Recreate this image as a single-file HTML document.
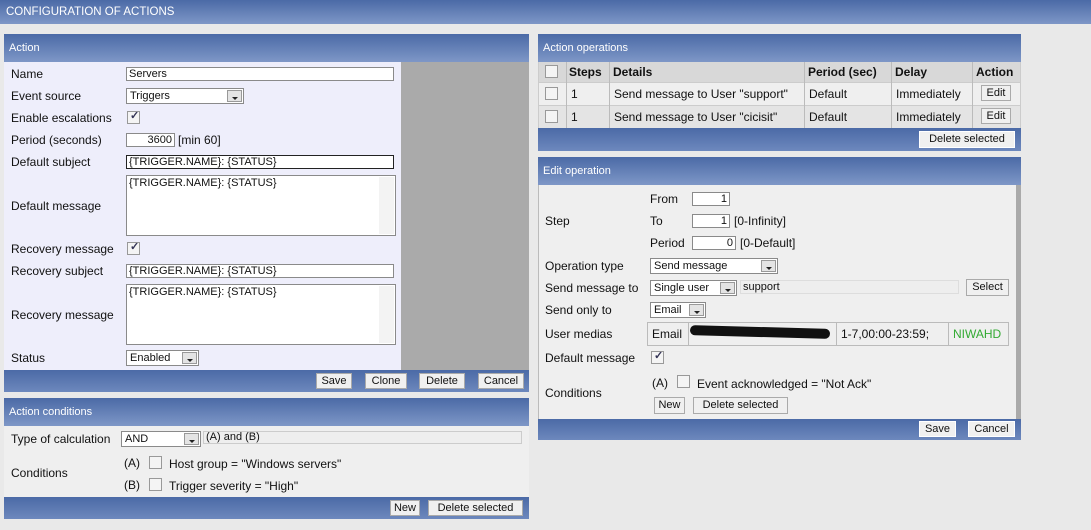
<!DOCTYPE html>
<html><head><style>
*{box-sizing:border-box;margin:0;padding:0}
body{width:1091px;height:530px;background:#e9e9e9;font-family:"Liberation Sans",Tahoma,sans-serif;font-size:12px;color:#111;position:relative;overflow:hidden}
.a{position:absolute;white-space:nowrap}
.hd{position:absolute;background:linear-gradient(#4b6aa6,#7e97c7);color:#fff;font-size:11px;padding-left:5px}
.ft{position:absolute;background:linear-gradient(#4b6aa6,#6d88bd)}
.in{position:absolute;background:#fff;border:1px solid #8a8a8a;font-size:11px;padding-left:2px;line-height:13px}
.sel{position:absolute;background:#fff;border:1px solid #8a8a8a;font-size:11px;padding-left:3px;line-height:15px}
.sel i{position:absolute;right:1px;top:1px;width:15px;bottom:1px;background:#e4e4e4;border:1px solid #999}
.sel i:after{content:"";position:absolute;left:4px;top:6px;border-left:3px solid transparent;border-right:3px solid transparent;border-top:3px solid #222}
.cb{position:absolute;width:13px;height:13px;background:#f4f4f4;border:1px solid #999}
.cb.on:after{content:"✓";position:absolute;left:2px;top:-3px;font-size:11px;color:#335;font-weight:bold}
.bt{position:absolute;background:#f0f0f0;border:1px solid #aaa;font-size:11px;text-align:center;line-height:15px}
.ta{position:absolute;background:#fff;border:1px solid #8a8a8a;font-size:11px;padding:1px 2px}
.ta:after{content:"";position:absolute;right:1px;top:1px;bottom:1px;width:15px;background:#f3f3f3}
</style></head><body>
<div class="hd" style="left:0;top:0;width:1091px;height:24px;line-height:24px;padding-left:6px;font-size:11.5px">CONFIGURATION OF ACTIONS</div>

<div class="hd" style="left:4px;top:34px;width:525px;height:28px;line-height:28px">Action</div>
<div class="a" style="left:4px;top:62px;width:397px;height:308px;background:#eeeefb"></div>
<div class="a" style="left:401px;top:62px;width:128px;height:308px;background:#aaa"></div>
<div class="ft" style="left:4px;top:370px;width:525px;height:22px"></div>
<div class="a" style="left:11px;top:67px">Name</div><div class="in" style="left:126px;top:67px;width:268px;height:14px">Servers</div>
<div class="a" style="left:11px;top:89px">Event source</div><div class="sel" style="left:126px;top:88px;width:118px;height:16px">Triggers<i></i></div>
<div class="a" style="left:11px;top:111px">Enable escalations</div><div class="cb on" style="left:127px;top:111px"></div>
<div class="a" style="left:11px;top:133px">Period (seconds)</div><div class="in" style="left:126px;top:133px;width:49px;height:14px;text-align:right;padding-right:2px">3600</div><div class="a" style="left:178px;top:133px">[min 60]</div>
<div class="a" style="left:11px;top:155px">Default subject</div><div class="in" style="left:126px;top:155px;width:268px;height:14px;border-color:#222">{TRIGGER.NAME}: {STATUS}</div>
<div class="a" style="left:11px;top:199px">Default message</div><div class="ta" style="left:126px;top:175px;width:270px;height:61px">{TRIGGER.NAME}: {STATUS}</div>
<div class="a" style="left:11px;top:242px">Recovery message</div><div class="cb on" style="left:127px;top:242px"></div>
<div class="a" style="left:11px;top:264px">Recovery subject</div><div class="in" style="left:126px;top:264px;width:268px;height:14px">{TRIGGER.NAME}: {STATUS}</div>
<div class="a" style="left:11px;top:308px">Recovery message</div><div class="ta" style="left:126px;top:284px;width:270px;height:61px">{TRIGGER.NAME}: {STATUS}</div>
<div class="a" style="left:11px;top:351px">Status</div><div class="sel" style="left:126px;top:350px;width:73px;height:16px">Enabled<i></i></div>
<div class="bt" style="left:316px;top:373px;width:36px;height:16px">Save</div>
<div class="bt" style="left:365px;top:373px;width:42px;height:16px">Clone</div>
<div class="bt" style="left:419px;top:373px;width:46px;height:16px">Delete</div>
<div class="bt" style="left:478px;top:373px;width:46px;height:16px">Cancel</div>

<div class="hd" style="left:4px;top:398px;width:525px;height:28px;line-height:28px">Action conditions</div>
<div class="a" style="left:4px;top:426px;width:525px;height:71px;background:#efefef"></div>
<div class="ft" style="left:4px;top:497px;width:525px;height:22px"></div>
<div class="a" style="left:11px;top:432px">Type of calculation</div><div class="sel" style="left:121px;top:431px;width:80px;height:16px">AND<i></i></div>
<div class="a" style="left:203px;top:431px;width:319px;height:13px;background:#eee;border:1px solid #ccc;font-size:11px;line-height:11px;padding-left:2px">(A) and (B)</div>
<div class="a" style="left:11px;top:466px">Conditions</div>
<div class="a" style="left:124px;top:456px">(A)</div><div class="cb" style="left:149px;top:456px"></div><div class="a" style="left:169px;top:457px">Host group = "Windows servers"</div>
<div class="a" style="left:124px;top:478px">(B)</div><div class="cb" style="left:149px;top:478px"></div><div class="a" style="left:169px;top:479px">Trigger severity = "High"</div>
<div class="bt" style="left:390px;top:500px;width:30px;height:16px">New</div>
<div class="bt" style="left:428px;top:500px;width:95px;height:16px">Delete selected</div>

<div class="hd" style="left:538px;top:34px;width:483px;height:28px;line-height:28px">Action operations</div>
<div class="a" style="left:538px;top:62px;width:483px;height:67px;background:#ccc"></div>
<div class="a" style="left:539px;top:62px;width:481px;height:20px;background:#d8d8d8"></div>
<div class="a" style="left:539px;top:83px;width:481px;height:22px;background:#efefef"></div>
<div class="a" style="left:539px;top:106px;width:481px;height:22px;background:#e4e4e4"></div>
<div class="a" style="left:566px;top:62px;width:1px;height:66px;background:#bbb"></div>
<div class="a" style="left:609px;top:62px;width:1px;height:66px;background:#bbb"></div>
<div class="a" style="left:804px;top:62px;width:1px;height:66px;background:#bbb"></div>
<div class="a" style="left:891px;top:62px;width:1px;height:66px;background:#bbb"></div>
<div class="a" style="left:972px;top:62px;width:1px;height:66px;background:#bbb"></div>
<div class="cb" style="left:545px;top:65px"></div>
<div class="a" style="left:569px;top:65px;font-weight:bold">Steps</div>
<div class="a" style="left:613px;top:65px;font-weight:bold">Details</div>
<div class="a" style="left:808px;top:65px;font-weight:bold">Period (sec)</div>
<div class="a" style="left:895px;top:65px;font-weight:bold">Delay</div>
<div class="a" style="left:976px;top:65px;font-weight:bold">Action</div>
<div class="cb" style="left:545px;top:87px"></div><div class="a" style="left:571px;top:87px">1</div>
<div class="a" style="left:614px;top:87px">Send message to User "support"</div><div class="a" style="left:809px;top:87px">Default</div><div class="a" style="left:896px;top:87px">Immediately</div>
<div class="bt" style="left:981px;top:85px;width:30px;height:16px">Edit</div>
<div class="cb" style="left:545px;top:110px"></div><div class="a" style="left:571px;top:110px">1</div>
<div class="a" style="left:614px;top:110px">Send message to User "cicisit"</div><div class="a" style="left:809px;top:110px">Default</div><div class="a" style="left:896px;top:110px">Immediately</div>
<div class="bt" style="left:981px;top:108px;width:30px;height:16px">Edit</div>
<div class="ft" style="left:538px;top:128px;width:483px;height:23px"></div>
<div class="bt" style="left:919px;top:131px;width:96px;height:17px;border-color:#fff">Delete selected</div>

<div class="hd" style="left:538px;top:157px;width:483px;height:28px;line-height:28px">Edit operation</div>
<div class="a" style="left:538px;top:185px;width:483px;height:234px;background:#efefef;border-left:1px solid #bbb;border-right:5px solid #aaa"></div>
<div class="ft" style="left:538px;top:419px;width:483px;height:21px"></div>
<div class="a" style="left:650px;top:192px">From</div><div class="in" style="left:692px;top:192px;width:38px;height:14px;text-align:right;padding-right:2px">1</div>
<div class="a" style="left:545px;top:214px">Step</div>
<div class="a" style="left:650px;top:214px">To</div><div class="in" style="left:692px;top:214px;width:38px;height:14px;text-align:right;padding-right:2px">1</div><div class="a" style="left:734px;top:214px">[0-Infinity]</div>
<div class="a" style="left:650px;top:236px">Period</div><div class="in" style="left:692px;top:236px;width:44px;height:14px;text-align:right;padding-right:2px">0</div><div class="a" style="left:740px;top:236px">[0-Default]</div>
<div class="a" style="left:545px;top:259px">Operation type</div><div class="sel" style="left:650px;top:258px;width:128px;height:16px">Send message<i></i></div>
<div class="a" style="left:545px;top:281px">Send message to</div><div class="sel" style="left:650px;top:280px;width:87px;height:16px">Single user<i></i></div>
<div class="a" style="left:740px;top:280px;width:219px;height:14px;background:#eee;border:1px solid #ddd;font-size:11px;line-height:12px;padding-left:2px">support</div>
<div class="bt" style="left:966px;top:279px;width:43px;height:17px">Select</div>
<div class="a" style="left:545px;top:303px">Send only to</div><div class="sel" style="left:650px;top:302px;width:56px;height:16px">Email<i></i></div>
<div class="a" style="left:545px;top:327px">User medias</div>
<div class="a" style="left:647px;top:322px;width:362px;height:24px;border:1px solid #bbb;background:#efefef"></div>
<div class="a" style="left:688px;top:322px;width:1px;height:24px;background:#bbb"></div>
<div class="a" style="left:836px;top:322px;width:1px;height:24px;background:#bbb"></div>
<div class="a" style="left:948px;top:322px;width:1px;height:24px;background:#bbb"></div>
<div class="a" style="left:652px;top:327px">Email</div>
<div class="a" style="left:690px;top:327px;width:140px;height:10px;background:#111;border-radius:6px;transform:rotate(1.5deg)"></div>
<div class="a" style="left:841px;top:327px">1-7,00:00-23:59;</div>
<div class="a" style="left:953px;top:327px;color:#3a3">NIWAHD</div>
<div class="a" style="left:545px;top:351px">Default message</div><div class="cb on" style="left:651px;top:351px"></div>
<div class="a" style="left:545px;top:386px">Conditions</div>
<div class="a" style="left:652px;top:376px">(A)</div><div class="cb" style="left:677px;top:375px"></div><div class="a" style="left:697px;top:377px">Event acknowledged = "Not Ack"</div>
<div class="bt" style="left:654px;top:397px;width:31px;height:17px">New</div>
<div class="bt" style="left:693px;top:397px;width:95px;height:17px">Delete selected</div>
<div class="bt" style="left:919px;top:421px;width:37px;height:16px;border-color:#fff">Save</div>
<div class="bt" style="left:968px;top:421px;width:47px;height:16px;border-color:#fff">Cancel</div>
</body></html>
